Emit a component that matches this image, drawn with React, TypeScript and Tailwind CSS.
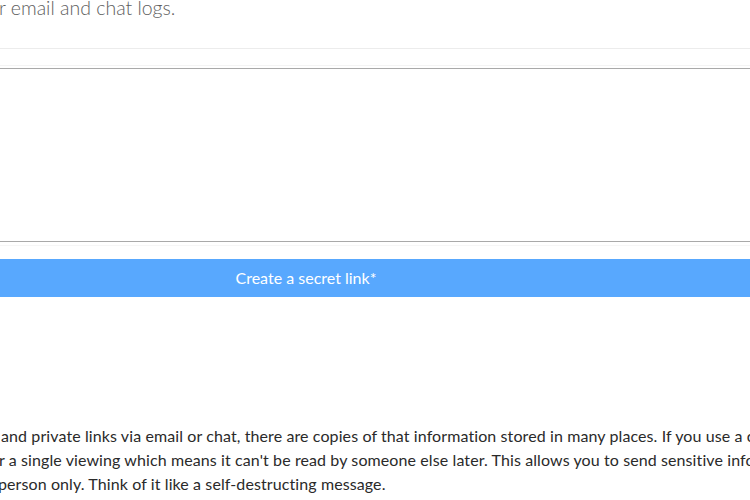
export default function App() {
  return (
    <div className="w-[750px] h-[500px] overflow-hidden bg-white" style={{ fontFamily: 'Lato, "Open Sans", sans-serif' }}>
      <div className="-ml-[138px] w-[888px] flex flex-col">
        <p className="-mt-[6px] h-[28px] pl-[137px] text-[19.5px] leading-[28px] font-light text-[#5e5e5e] whitespace-nowrap">
          r email and chat logs.
        </p>
        <div className="mt-[26px] border-t border-[#ececec]" />
        <form className="mt-[16px] flex flex-col">
          <div className="border-t border-[#f4f4f4]" />
          <textarea
            className="mt-[2px] h-[174px] w-full resize-none border-y border-[#a9a9a9] bg-white outline-none"
            aria-label="Secret content"
          />
          <div className="mt-[3px] border-t border-[#f6f6f6]" />
          <button
            type="button"
            className="mt-[13px] h-[38px] w-full bg-[#58a8fe] text-[16px] text-white"
          >
            Create a secret link*
          </button>
        </form>
        <div className="mt-[127px] pl-[138px] text-[16px] leading-[24px] tracking-[0.1px] text-[#2a2a2a] whitespace-nowrap">
          <p className="ml-[1px]">
            and private links via email or chat, there are copies of that information stored in many places. If you use a one-time link instead
          </p>
          <p className="-ml-[1px]">
            r a single viewing which means it can't be read by someone else later. This allows you to send sensitive information in a safe way
          </p>
          <p className="-ml-[2px]">person only. Think of it like a self-destructing message.</p>
        </div>
      </div>
    </div>
  );
}
